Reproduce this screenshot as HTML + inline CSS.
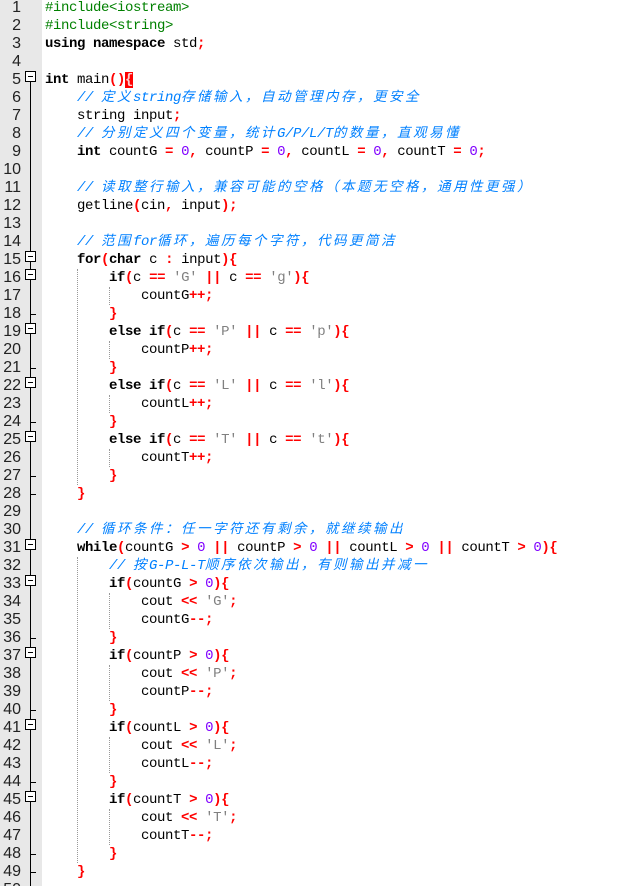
<!DOCTYPE html>
<html><head><meta charset="utf-8"><style>
html,body{margin:0;padding:0;background:#fff;width:640px;height:886px;overflow:hidden;position:relative}
.g{position:absolute;left:0;top:0;width:42px;height:886px;background:#e8e8e8}
.ln{position:absolute;left:0;width:21px;text-align:right;font:16px/18px "Liberation Sans",sans-serif;color:#222}
.l{position:absolute;left:45px;height:18px;font:14px/18px "Liberation Mono",monospace;letter-spacing:-0.4px;white-space:pre;color:#000}
.k{font-weight:bold}
.o{color:#f00;font-weight:bold}
.n{color:#8000ff}
.s{color:#808080}
.p{color:#008000}
.c{color:#0080ff;font-style:italic}
.j{font-family:"Noto Sans CJK SC",sans-serif;font-size:13.5px;letter-spacing:2.5px;line-height:0}
.bx{position:absolute;left:25px;width:9px;height:9px;border:1px solid #000;background:#fff}
.bx:after{content:"";position:absolute;left:2px;top:4px;width:5px;height:1px;background:#000}
.vl{position:absolute;left:30px;width:1px;background:#000}
.tk{position:absolute;left:30px;width:6px;height:1px;background:#000}
.gd{position:absolute;width:0;border-left:1px dotted #999}
.hl{background:#f00;color:#fcc}
</style></head><body>
<div class="g"></div>
<div class="vl" style="top:80px;height:806px"></div>

<div class="bx" style="top:71px"></div>
<div class="bx" style="top:251px"></div>
<div class="bx" style="top:269px"></div>
<div class="bx" style="top:323px"></div>
<div class="bx" style="top:377px"></div>
<div class="bx" style="top:431px"></div>
<div class="bx" style="top:539px"></div>
<div class="bx" style="top:575px"></div>
<div class="bx" style="top:647px"></div>
<div class="bx" style="top:719px"></div>
<div class="bx" style="top:791px"></div>
<div class="tk" style="top:314px"></div>
<div class="tk" style="top:368px"></div>
<div class="tk" style="top:422px"></div>
<div class="tk" style="top:476px"></div>
<div class="tk" style="top:494px"></div>
<div class="tk" style="top:638px"></div>
<div class="tk" style="top:710px"></div>
<div class="tk" style="top:782px"></div>
<div class="tk" style="top:854px"></div>
<div class="tk" style="top:872px"></div>

<div class="gd" style="left:77px;top:269px;height:216px"></div>
<div class="gd" style="left:77px;top:557px;height:306px"></div>
<div class="gd" style="left:109px;top:287px;height:18px"></div>
<div class="gd" style="left:109px;top:341px;height:18px"></div>
<div class="gd" style="left:109px;top:395px;height:18px"></div>
<div class="gd" style="left:109px;top:449px;height:18px"></div>
<div class="gd" style="left:109px;top:593px;height:36px"></div>
<div class="gd" style="left:109px;top:665px;height:36px"></div>
<div class="gd" style="left:109px;top:737px;height:36px"></div>
<div class="gd" style="left:109px;top:809px;height:36px"></div>

<div class="ln" style="top:-1px">1</div><div class="ln" style="top:17px">2</div><div class="ln" style="top:35px">3</div><div class="ln" style="top:53px">4</div><div class="ln" style="top:71px">5</div><div class="ln" style="top:89px">6</div><div class="ln" style="top:107px">7</div><div class="ln" style="top:125px">8</div><div class="ln" style="top:143px">9</div><div class="ln" style="top:161px">10</div><div class="ln" style="top:179px">11</div><div class="ln" style="top:197px">12</div><div class="ln" style="top:215px">13</div><div class="ln" style="top:233px">14</div><div class="ln" style="top:251px">15</div><div class="ln" style="top:269px">16</div><div class="ln" style="top:287px">17</div><div class="ln" style="top:305px">18</div><div class="ln" style="top:323px">19</div><div class="ln" style="top:341px">20</div><div class="ln" style="top:359px">21</div><div class="ln" style="top:377px">22</div><div class="ln" style="top:395px">23</div><div class="ln" style="top:413px">24</div><div class="ln" style="top:431px">25</div><div class="ln" style="top:449px">26</div><div class="ln" style="top:467px">27</div><div class="ln" style="top:485px">28</div><div class="ln" style="top:503px">29</div><div class="ln" style="top:521px">30</div><div class="ln" style="top:539px">31</div><div class="ln" style="top:557px">32</div><div class="ln" style="top:575px">33</div><div class="ln" style="top:593px">34</div><div class="ln" style="top:611px">35</div><div class="ln" style="top:629px">36</div><div class="ln" style="top:647px">37</div><div class="ln" style="top:665px">38</div><div class="ln" style="top:683px">39</div><div class="ln" style="top:701px">40</div><div class="ln" style="top:719px">41</div><div class="ln" style="top:737px">42</div><div class="ln" style="top:755px">43</div><div class="ln" style="top:773px">44</div><div class="ln" style="top:791px">45</div><div class="ln" style="top:809px">46</div><div class="ln" style="top:827px">47</div><div class="ln" style="top:845px">48</div><div class="ln" style="top:863px">49</div><div class="ln" style="top:881px">50</div>

<div class="l" style="top:-1px"><span class="p">#include&lt;iostream&gt;</span></div>
<div class="l" style="top:17px"><span class="p">#include&lt;string&gt;</span></div>
<div class="l" style="top:35px"><span class="k">using namespace</span> std<span class="o">;</span></div>
<div class="l" style="top:71px"><span class="k">int</span> main<span class="o">()</span><span class="o hl">{</span></div>
<div class="l" style="top:89px">    <span class="c">// <span class="j">定义</span>string<span class="j">存储输入，自动管理内存，更安全</span></span></div>
<div class="l" style="top:107px">    string input<span class="o">;</span></div>
<div class="l" style="top:125px">    <span class="c">// <span class="j">分别定义四个变量，统计</span>G/P/L/T<span class="j">的数量，直观易懂</span></span></div>
<div class="l" style="top:143px">    <span class="k">int</span> countG <span class="o">=</span> <span class="n">0</span><span class="o">,</span> countP <span class="o">=</span> <span class="n">0</span><span class="o">,</span> countL <span class="o">=</span> <span class="n">0</span><span class="o">,</span> countT <span class="o">=</span> <span class="n">0</span><span class="o">;</span></div>
<div class="l" style="top:179px">    <span class="c">// <span class="j">读取整行输入，兼容可能的空格（本题无空格，通用性更强）</span></span></div>
<div class="l" style="top:197px">    getline<span class="o">(</span>cin<span class="o">,</span> input<span class="o">);</span></div>
<div class="l" style="top:233px">    <span class="c">// <span class="j">范围</span>for<span class="j">循环，遍历每个字符，代码更简洁</span></span></div>
<div class="l" style="top:251px">    <span class="k">for</span><span class="o">(</span><span class="k">char</span> c <span class="o">:</span> input<span class="o">){</span></div>
<div class="l" style="top:269px">        <span class="k">if</span><span class="o">(</span>c <span class="o">==</span> <span class="s">'G'</span> <span class="o">||</span> c <span class="o">==</span> <span class="s">'g'</span><span class="o">){</span></div>
<div class="l" style="top:287px">            countG<span class="o">++;</span></div>
<div class="l" style="top:305px">        <span class="o">}</span></div>
<div class="l" style="top:323px">        <span class="k">else if</span><span class="o">(</span>c <span class="o">==</span> <span class="s">'P'</span> <span class="o">||</span> c <span class="o">==</span> <span class="s">'p'</span><span class="o">){</span></div>
<div class="l" style="top:341px">            countP<span class="o">++;</span></div>
<div class="l" style="top:359px">        <span class="o">}</span></div>
<div class="l" style="top:377px">        <span class="k">else if</span><span class="o">(</span>c <span class="o">==</span> <span class="s">'L'</span> <span class="o">||</span> c <span class="o">==</span> <span class="s">'l'</span><span class="o">){</span></div>
<div class="l" style="top:395px">            countL<span class="o">++;</span></div>
<div class="l" style="top:413px">        <span class="o">}</span></div>
<div class="l" style="top:431px">        <span class="k">else if</span><span class="o">(</span>c <span class="o">==</span> <span class="s">'T'</span> <span class="o">||</span> c <span class="o">==</span> <span class="s">'t'</span><span class="o">){</span></div>
<div class="l" style="top:449px">            countT<span class="o">++;</span></div>
<div class="l" style="top:467px">        <span class="o">}</span></div>
<div class="l" style="top:485px">    <span class="o">}</span></div>
<div class="l" style="top:521px">    <span class="c">// <span class="j">循环条件：任一字符还有剩余，就继续输出</span></span></div>
<div class="l" style="top:539px">    <span class="k">while</span><span class="o">(</span>countG <span class="o">&gt;</span> <span class="n">0</span> <span class="o">||</span> countP <span class="o">&gt;</span> <span class="n">0</span> <span class="o">||</span> countL <span class="o">&gt;</span> <span class="n">0</span> <span class="o">||</span> countT <span class="o">&gt;</span> <span class="n">0</span><span class="o">){</span></div>
<div class="l" style="top:557px">        <span class="c">// <span class="j">按</span>G-P-L-T<span class="j">顺序依次输出，有则输出并减一</span></span></div>
<div class="l" style="top:575px">        <span class="k">if</span><span class="o">(</span>countG <span class="o">&gt;</span> <span class="n">0</span><span class="o">){</span></div>
<div class="l" style="top:593px">            cout <span class="o">&lt;&lt;</span> <span class="s">'G'</span><span class="o">;</span></div>
<div class="l" style="top:611px">            countG<span class="o">--;</span></div>
<div class="l" style="top:629px">        <span class="o">}</span></div>
<div class="l" style="top:647px">        <span class="k">if</span><span class="o">(</span>countP <span class="o">&gt;</span> <span class="n">0</span><span class="o">){</span></div>
<div class="l" style="top:665px">            cout <span class="o">&lt;&lt;</span> <span class="s">'P'</span><span class="o">;</span></div>
<div class="l" style="top:683px">            countP<span class="o">--;</span></div>
<div class="l" style="top:701px">        <span class="o">}</span></div>
<div class="l" style="top:719px">        <span class="k">if</span><span class="o">(</span>countL <span class="o">&gt;</span> <span class="n">0</span><span class="o">){</span></div>
<div class="l" style="top:737px">            cout <span class="o">&lt;&lt;</span> <span class="s">'L'</span><span class="o">;</span></div>
<div class="l" style="top:755px">            countL<span class="o">--;</span></div>
<div class="l" style="top:773px">        <span class="o">}</span></div>
<div class="l" style="top:791px">        <span class="k">if</span><span class="o">(</span>countT <span class="o">&gt;</span> <span class="n">0</span><span class="o">){</span></div>
<div class="l" style="top:809px">            cout <span class="o">&lt;&lt;</span> <span class="s">'T'</span><span class="o">;</span></div>
<div class="l" style="top:827px">            countT<span class="o">--;</span></div>
<div class="l" style="top:845px">        <span class="o">}</span></div>
<div class="l" style="top:863px">    <span class="o">}</span></div>
</body></html>
